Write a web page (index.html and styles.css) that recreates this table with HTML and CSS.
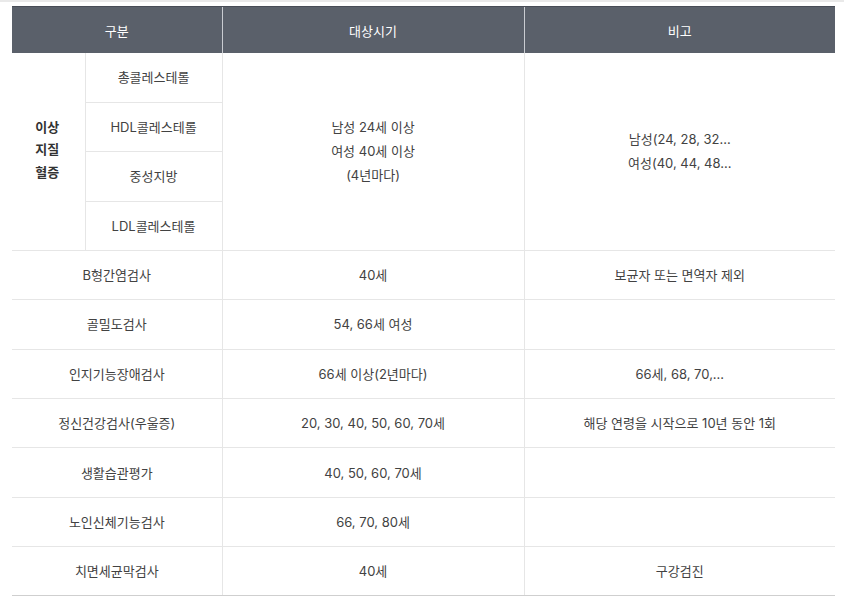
FILE: index.html
```html
<!DOCTYPE html>
<html lang="ko">
<head>
<meta charset="utf-8">
<title>검진 항목</title>
<link rel="stylesheet" href="styles.css">
</head>
<body>
<div class="page">
  <table class="exam">
    <colgroup>
      <col class="c-group">
      <col class="c-sub">
      <col class="c-when">
      <col class="c-note">
    </colgroup>
    <thead>
      <tr>
        <th colspan="2">구분</th>
        <th class="div">대상시기</th>
        <th class="div">비고</th>
      </tr>
    </thead>
    <tbody>
      <tr>
        <td rowspan="4" class="group">이상<br>지질<br>혈증</td>
        <td class="sub">총콜레스테롤</td>
        <td rowspan="4" class="multi">남성 24세 이상<br>여성 40세 이상<br>(4년마다)</td>
        <td rowspan="4" class="multi">남성(24, 28, 32...<br>여성(40, 44, 48...</td>
      </tr>
      <tr><td class="sub">HDL콜레스테롤</td></tr>
      <tr><td class="sub">중성지방</td></tr>
      <tr><td class="sub">LDL콜레스테롤</td></tr>
      <tr>
        <td colspan="2" class="first">B형간염검사</td>
        <td>40세</td>
        <td>보균자 또는 면역자 제외</td>
      </tr>
      <tr>
        <td colspan="2" class="first">골밀도검사</td>
        <td>54, 66세 여성</td>
        <td></td>
      </tr>
      <tr>
        <td colspan="2" class="first">인지기능장애검사</td>
        <td>66세 이상(2년마다)</td>
        <td>66세, 68, 70,...</td>
      </tr>
      <tr>
        <td colspan="2" class="first">정신건강검사(우울증)</td>
        <td>20, 30, 40, 50, 60, 70세</td>
        <td>해당 연령을 시작으로 10년 동안 1회</td>
      </tr>
      <tr>
        <td colspan="2" class="first">생활습관평가</td>
        <td>40, 50, 60, 70세</td>
        <td></td>
      </tr>
      <tr>
        <td colspan="2" class="first">노인신체기능검사</td>
        <td>66, 70, 80세</td>
        <td></td>
      </tr>
      <tr class="last">
        <td colspan="2" class="first">치면세균막검사</td>
        <td>40세</td>
        <td>구강검진</td>
      </tr>
    </tbody>
  </table>
</div>
</body>
</html>
```

FILE: styles.css
```css
html, body {
  margin: 0;
  padding: 0;
  background: #ffffff;
}

body {
  font-family: Inter, "Noto Sans CJK KR", sans-serif;
  color: #444444;
}

.page {
  border-top: 2px solid #e9e9e9;
  padding: 4px 9px 0 12px;
}

.exam {
  width: 823px;
  border-collapse: collapse;
  table-layout: fixed;
}

.c-group { width: 73px; }
.c-sub { width: 137px; }
.c-when { width: 302px; }
.c-note { width: 311px; }

.exam th {
  height: 46px;
  padding: 0;
  background: #5a606a;
  color: #ffffff;
  font-size: 13px;
  font-weight: 400;
  text-align: center;
  vertical-align: middle;
  border-top: 1px solid #474c56;
}

.exam th.div {
  border-left: 1px solid #c9ccd1;
}

.exam tbody tr {
  height: 49.36px;
}

.exam td {
  padding: 0 8px;
  font-size: 13px;
  line-height: 20px;
  text-align: center;
  vertical-align: middle;
  color: #424242;
  border-bottom: 1px solid #e6e6e6;
  border-left: 1px solid #e6e6e6;
}

.exam td.first,
.exam td.group {
  border-left: none;
}

.exam td.group {
  font-weight: 700;
  color: #333333;
  line-height: 22.5px;
  padding: 0 2px 4px 0;
}

.exam td.multi {
  line-height: 24px;
}

.exam tr.last td {
  border-bottom: 1px solid #cfcfcf;
}
```
